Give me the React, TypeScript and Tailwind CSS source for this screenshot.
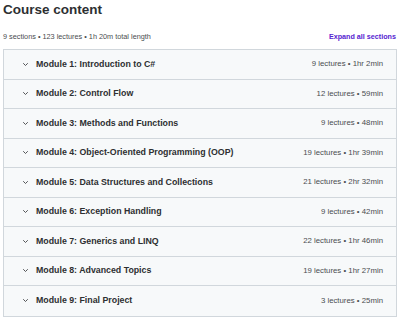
import React from 'react'

const modules = [
    {title: 'Module 1: Introduction to C#', meta: '9 lectures • 1hr 2min'},
    {title: 'Module 2: Control Flow', meta: '12 lectures • 59min'},
    {title: 'Module 3: Methods and Functions', meta: '9 lectures • 48min'},
    {title: 'Module 4: Object-Oriented Programming (OOP)', meta: '19 lectures • 1hr 39min'},
    {title: 'Module 5: Data Structures and Collections', meta: '21 lectures • 2hr 32min'},
    {title: 'Module 6: Exception Handling', meta: '9 lectures • 42min'},
    {title: 'Module 7: Generics and LINQ', meta: '22 lectures • 1hr 46min'},
    {title: 'Module 8: Advanced Topics', meta: '19 lectures • 1hr 27min'},
    {title: 'Module 9: Final Project', meta: '3 lectures • 25min'},
]

const Chevron = () => (
    <svg width="5" height="3" viewBox="0 0 5 3" fill="none" className="shrink-0">
        <path d="M0.5 0.5 L2.5 2.5 L4.5 0.5" stroke="#3e4143" strokeWidth="0.9" strokeLinecap="round" strokeLinejoin="round"/>
    </svg>
)

const App = () => {
    return (
        <div className="w-[400px] h-[321px] bg-white text-[#2d2f31] overflow-hidden" style={{fontFamily: '"Liberation Sans", Arial, sans-serif'}}>
            <div className="px-[3px] pt-[1px]">
                <h2 className="text-[13.5px] font-bold leading-[18px]">Course content</h2>
                <div className="flex items-end justify-between mt-[13px] pr-[1px]">
                    <span className="text-[7.3px] leading-[10px] text-[#4a4d50]">9 sections • 123 lectures • 1h 20m total length</span>
                    <span className="text-[7.2px] leading-[10px] font-bold text-[#5624d0]">Expand all sections</span>
                </div>
            </div>

            {/* Sections list */}
            <div className="mx-[3px] mt-[7px] w-[394px] border border-[#d1d7dc] bg-[#f7f9fa]">
                {modules.map((m, i) => (
                    <div key={i} className={`flex items-center h-[29.5px] pl-[19px] pr-[13px] ${i < modules.length - 1 ? 'border-b border-[#d1d7dc]' : ''}`}>
                        <Chevron/>
                        <span className="ml-[8px] text-[8.8px] font-bold">{m.title}</span>
                        <span className="ml-auto text-[7.8px] text-[#4a4d50]">{m.meta}</span>
                    </div>
                ))}
            </div>
        </div>
    )
}

export default App
